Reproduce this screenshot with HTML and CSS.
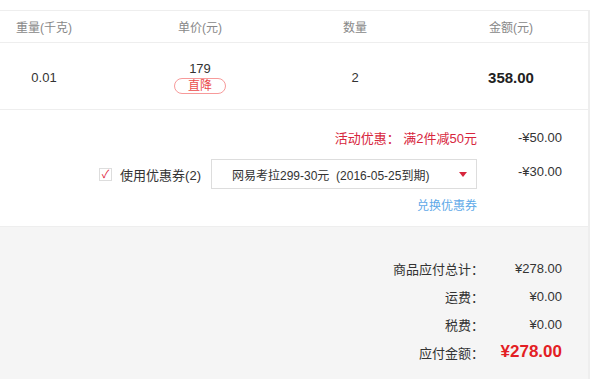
FILE: index.html
```html
<!DOCTYPE html>
<html>
<head>
  <title>订单确认</title>
  <link rel="stylesheet" href="styles.css">
</head>
<body>

<div class="order">
  <div class="row head">
    <div class="c1">重量(千克)</div>
    <div class="c2">单价(元)</div>
    <div class="c3">数量</div>
    <div class="c4">金额(元)</div>
  </div>

  <div class="row item">
    <div class="c1">0.01</div>
    <div class="c2">
      <div>179</div>
      <span class="tag">直降</span>
    </div>
    <div class="c3">2</div>
    <div class="c4 total">358.00</div>
  </div>

  <div class="discount">
    <div class="line">
      <div class="promo">活动优惠：&nbsp;满2件减50元</div>
      <div class="val">-¥50.00</div>
    </div>
    <div class="line coupon">
      <label class="check"><span class="box">✓</span>使用优惠券(2)</label>
      <div class="select">
        <span>网易考拉299-30元&nbsp;&nbsp;(2016-05-25到期)</span>
        <i class="arrow"></i>
      </div>
      <div class="val">-¥30.00</div>
    </div>
    <div class="line">
      <a class="swap" href="#">兑换优惠券</a>
      <div class="val"></div>
    </div>
  </div>

  <div class="summary">
    <div class="sum"><span class="lbl">商品应付总计：</span><span class="num">¥278.00</span></div>
    <div class="sum"><span class="lbl">运费：</span><span class="num">¥0.00</span></div>
    <div class="sum"><span class="lbl">税费：</span><span class="num">¥0.00</span></div>
    <div class="sum pay"><span class="lbl">应付金额：</span><span class="num">¥278.00</span></div>
  </div>
</div>

</body>
</html>
```

FILE: styles.css
```css
html, body {
  margin: 0;
  background: #fff;
  font-family: "Liberation Sans", "Noto Sans CJK SC", sans-serif;
  font-size: 13px;
  color: #333;
}
.order {
  margin-top: 10px;
  width: 588px;
  height: 368px;
  border-top: 1px solid #eee;
  border-right: 2px solid #eee;
  display: flex;
  flex-direction: column;
}
.row {
  display: grid;
  grid-template-columns: 88px 224px 86px 1fr;
  align-items: center;
  text-align: center;
  border-bottom: 1px solid #eee;
}
.c4 {
  padding-left: 36px;
}
.head {
  height: 31px;
  font-size: 12px;
  color: #888;
}
.item {
  height: 66px;
  font-size: 13px;
}
.item .c1, .item .c3, .item .c4 {
  padding-top: 2px;
}
.item .c2 {
  line-height: 16px;
  padding-top: 2px;
}
.tag {
  display: inline-block;
  margin-top: 1px;
  width: 50px;
  height: 14px;
  line-height: 14px;
  border: 1px solid #f79a9a;
  border-radius: 8px;
  color: #ea4b4b;
  font-size: 12px;
}
.total {
  font-weight: bold;
  font-size: 15px;
  color: #222;
}
.discount {
  height: 117px;
  box-sizing: border-box;
  padding-top: 18px;
  border-bottom: 1px solid #eee;
}
.line {
  display: flex;
  justify-content: flex-end;
  align-items: center;
  padding-right: 26px;
}
.val {
  width: 85px;
  text-align: right;
}
.promo {
  color: #d7263d;
}
.coupon {
  margin-top: 12px;
}
.check {
  display: flex;
  align-items: center;
  margin-right: 10px;
  color: #333;
}
.box {
  width: 11px;
  height: 11px;
  border: 1px solid #ddd;
  margin-right: 8px;
  color: #e0223a;
  font-size: 11px;
  line-height: 11px;
  text-align: center;
}
.select {
  border: 1px solid #ddd;
  display: flex;
  align-items: center;
  justify-content: space-between;
  padding: 0 9px 0 20px;
  box-sizing: border-box;
  width: 266px;
  height: 30px;
  font-size: 12px;
}
.arrow {
  width: 0;
  height: 0;
  border-left: 4px solid transparent;
  border-right: 4px solid transparent;
  border-top: 5px solid #d7263d;
}
.coupon .val {
  margin-top: -5px;
}
.swap {
  margin-top: 7px;
  color: #5ea9e8;
  font-size: 12px;
  text-decoration: none;
}
.summary {
  flex: 1;
  background: #f5f5f5;
  padding-top: 27px;
}
.sum {
  display: flex;
  justify-content: flex-end;
  align-items: center;
  height: 28px;
  padding-right: 26px;
}
.lbl {
  text-align: right;
}
.num {
  width: 78px;
  text-align: right;
}
.pay .num {
  color: #e31e24;
  font-weight: bold;
  font-size: 17px;
}
```
